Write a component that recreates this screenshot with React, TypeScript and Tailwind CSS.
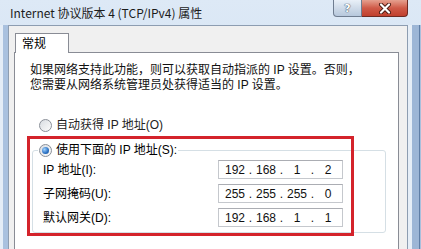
import React from 'react';

// Win7 "Internet 协议版本 4 (TCP/IPv4) 属性" dialog, cropped

const octetsList = [
  { label: 'IP 地址(I):', value: ['192', '168', '1', '2'] },
  { label: '子网掩码(U):', value: ['255', '255', '255', '0'] },
  { label: '默认网关(D):', value: ['192', '168', '1', '1'] },
];

function Radio({ checked }: { checked?: boolean }) {
  return (
    <span className="flex h-[13px] w-[13px] shrink-0 items-center justify-center rounded-full border border-[#8a8f98] bg-gradient-to-br from-[#d9dde2] to-[#fbfbfb]">
      {checked && (
        <span className="h-[7px] w-[7px] rounded-full bg-[radial-gradient(circle_at_35%_35%,#9fd3ff,#2a6fc2_60%,#18508f)]" />
      )}
    </span>
  );
}

function IpField({ value }: { value: string[] }) {
  return (
    <div className="flex h-[19px] w-[125px] items-center border border-[#c5c8cd] border-t-[#abadb3] bg-white pl-[4px] leading-none text-[#111]">
      {value.map((v, i) => (
        <React.Fragment key={i}>
          <span className="w-[24px] text-center">{v}</span>
          {i < 3 && <span className="w-[7px] text-center">.</span>}
        </React.Fragment>
      ))}
    </div>
  );
}

function TitleBar() {
  return (
    <div className="flex h-[25px] items-start">
      <span className="pl-[10px] pt-[4px] font-['Noto_Sans_CJK_SC',sans-serif] text-[12px] leading-[18px] text-[#1b1b1b]">
        Internet 协议版本 4 (TCP/IPv4) 属性
      </span>
      <div className="ml-auto mr-[13px] flex">
        <div className="flex h-[17px] w-[29px] items-center justify-center rounded-bl-[4px] border border-t-0 border-[#6f7d90] bg-gradient-to-b from-[#e9f0f8] via-[#cfdbe9] to-[#b7c8dc]">
          <span className="font-['DejaVu_Sans',sans-serif] text-[11px] font-bold leading-none text-white [text-shadow:0_0_1px_#2c3b50,0_0_1px_#2c3b50]">?</span>
        </div>
        <div className="flex h-[17px] w-[46px] items-center justify-center rounded-br-[4px] border border-l-0 border-t-0 border-[#6e2a22] bg-gradient-to-b from-[#e5a08f] via-[#cf5a48] to-[#c0402e]">
          <svg width="14" height="11" viewBox="0 0 14 11">
            <path d="M3 1.5 L11 9.5 M11 1.5 L3 9.5" stroke="#4a1a12" strokeWidth="4" strokeLinecap="round" />
            <path d="M3 1.5 L11 9.5 M11 1.5 L3 9.5" stroke="#ffffff" strokeWidth="2.2" strokeLinecap="round" />
          </svg>
        </div>
      </div>
    </div>
  );
}

export default function App() {
  return (
    <div className="relative flex h-[249px] w-[421px] flex-col overflow-hidden bg-gradient-to-b from-[#dde9f6] to-[#c9dcf0] font-['Liberation_Sans','Noto_Sans_CJK_SC',sans-serif] text-[12px] text-black">
      <TitleBar />

      <div className="flex flex-1">
        {/* left frame */}
        <div className="flex w-[8px]">
          <div className="w-[3px] bg-[#e4edf7]" />
          <div className="w-[5px] bg-[#a9c1df]" />
        </div>

        {/* dialog body */}
        <div className="flex w-[400px] flex-col border border-b-0 border-[#8d9db1] bg-[#f0f0f0] pl-[5px] pt-[7px]">
          <div className="relative z-10 -mb-px ml-[1px] flex h-[20px] w-[54px] items-center border border-b-0 border-[#898c95] bg-white pl-[6px]">
            <span className="leading-none">常规</span>
          </div>

          <div className="flex w-[385px] flex-1 flex-col border border-b-0 border-[#898c95] bg-white pt-[10px]">
            <p className="whitespace-nowrap pl-[15px] leading-[15px] text-[#111]">
              如果网络支持此功能，则可以获取自动指派的 IP 设置。否则，
              <br />
              您需要从网络系统管理员处获得适当的 IP 设置。
            </p>

            <label className="ml-[24px] mt-[24px] flex h-[16px] items-center gap-[4px] leading-none text-[#222]">
              <Radio />
              <span>自动获得 IP 地址(O)</span>
            </label>

            <fieldset className="ml-[17px] mt-[9px] w-[354px] rounded-[3px] border border-[#d5dfe5] pb-[5px]">
              <legend className="ml-[5px] flex h-[16px] items-center gap-[4px] px-[1px] leading-none">
                <Radio checked />
                <span>使用下面的 IP 地址(S):</span>
              </legend>
              <div className="mt-[2px] flex flex-col gap-[5px] pl-[10px]">
                {octetsList.map((row) => (
                  <div key={row.label} className="flex items-center">
                    <span className="w-[175px] leading-none">{row.label}</span>
                    <IpField value={row.value} />
                  </div>
                ))}
              </div>
            </fieldset>
          </div>
        </div>

        {/* right frame */}
        <div className="flex w-[13px]">
          <div className="w-[4px] bg-[#e6eef7]" />
          <div className="w-[7px] bg-[#9db6d6]" />
          <div className="w-[1px] bg-[#5f7ea6]" />
          <div className="w-[1px] bg-[#a9c0dd]" />
        </div>
      </div>

      {/* red annotation box */}
      <div className="absolute left-[27px] top-[136px] h-[100px] w-[327px] border-[3px] border-[#d4232b]" />
    </div>
  );
}
